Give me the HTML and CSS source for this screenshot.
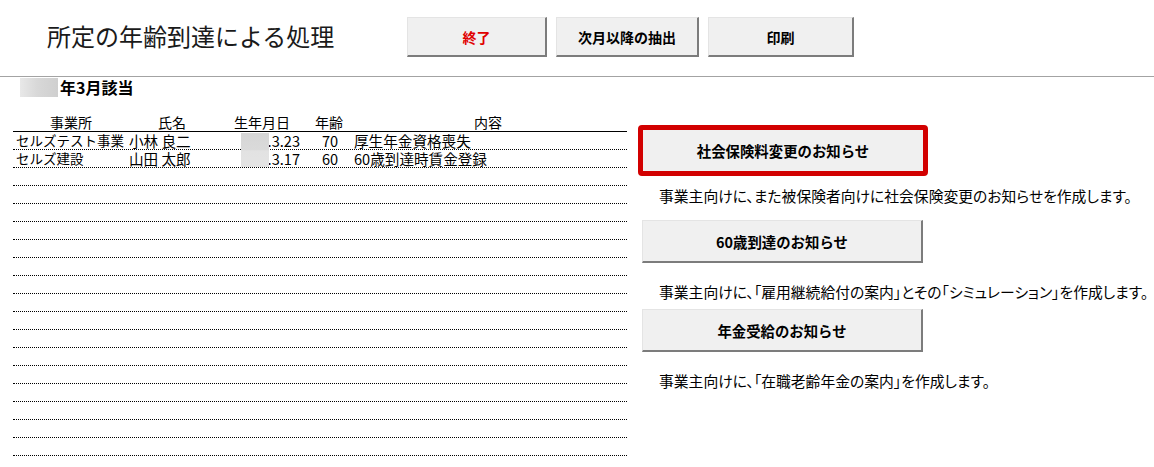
FILE: index.html
```html
<!DOCTYPE html>
<html>

<head>
    <meta charset="UTF-8">
    <title>所定の年齢到達による処理</title>
    <link rel="stylesheet" href="styles.css">
</head>

<body>
    <header class="toolbar">
        <h1 class="title">所定の年齢到達による処理</h1>
        <div class="toolbar-buttons">
            <button class="sheet-button exit">終了</button>
            <button class="sheet-button next">次月以降の抽出</button>
            <button class="sheet-button print">印刷</button>
        </div>
    </header>

    <div class="period">
        <span class="redact-year"></span>
        <span class="period-label">年3月該当</span>
    </div>

    <div class="content">
        <div class="ledger">
            <div class="ledger-head">
                <span>事業所</span>
                <span>氏名</span>
                <span>生年月日</span>
                <span>年齢</span>
                <span>内容</span>
            </div>
            <div class="ledger-row">
                <span class="cell-office">セルズテスト事業</span>
                <span class="cell-name">小林 良二</span>
                <span class="cell-birth">.3.23</span>
                <span class="cell-age">70</span>
                <span class="cell-note">厚生年金資格喪失</span>
            </div>
            <div class="ledger-row">
                <span class="cell-office">セルズ建設</span>
                <span class="cell-name">山田 太郎</span>
                <span class="cell-birth">.3.17</span>
                <span class="cell-age">60</span>
                <span class="cell-note">60歳到達時賃金登録</span>
            </div>
            <div class="ledger-row"></div>
            <div class="ledger-row"></div>
            <div class="ledger-row"></div>
            <div class="ledger-row"></div>
            <div class="ledger-row"></div>
            <div class="ledger-row"></div>
            <div class="ledger-row"></div>
            <div class="ledger-row"></div>
            <div class="ledger-row"></div>
            <div class="ledger-row"></div>
            <div class="ledger-row"></div>
            <div class="ledger-row"></div>
            <div class="ledger-row"></div>
            <div class="ledger-row"></div>
            <div class="ledger-row"></div>
            <div class="ledger-row"></div>
            <!-- blurred birth years -->
            <span class="redact-birth"></span>
        </div>

        <section class="notices">
            <div class="notice notice-primary">
                <div class="notice-frame">
                    <button class="notice-button">社会保険料変更のお知らせ</button>
                </div>
                <p class="notice-text">事業主向けに、また被保険者向けに社会保険変更のお知らせを作成します。</p>
            </div>
            <div class="notice">
                <button class="notice-button">60歳到達のお知らせ</button>
                <p class="notice-text">事業主向けに、「雇用継続給付の案内」とその「シミュレーション」を作成します。</p>
            </div>
            <div class="notice">
                <button class="notice-button">年金受給のお知らせ</button>
                <p class="notice-text">事業主向けに、「在職老齢年金の案内」を作成します。</p>
            </div>
        </section>
    </div>
</body>

</html>
```

FILE: styles.css
```css
html,
body {
    margin: 0;
    width: 100%;
    height: 100%;
    background-color: #FFFFFF;
    color: #000000;
    font-family: "Noto Sans CJK JP", sans-serif;
}

button {
    font-family: inherit;
    cursor: pointer;
}

.toolbar {
    display: flex;
    align-items: flex-start;
    height: 59px;
    padding-top: 17px;
    border-bottom: 1px solid #A3A3A3;
}

.title {
    box-sizing: border-box;
    flex: 0 0 407px;
    margin: 3px 0 0;
    padding-left: 47px;
    font-size: 24px;
    font-weight: normal;
    line-height: 32px;
    color: #1A1A1A;
}

.toolbar-buttons {
    display: flex;
    gap: 9px;
}

.sheet-button {
    box-sizing: border-box;
    height: 40px;
    padding: 0;
    font-size: 14px;
    font-weight: bold;
    color: #000000;
    background: #F0F0F0;
    border: 1px solid #E4E4E4;
    border-right: 2px solid #7C7C7C;
    border-bottom: 2px solid #7C7C7C;
}

.sheet-button.exit {
    width: 140px;
    color: #E00000;
}

.sheet-button.next {
    width: 143px;
}

.sheet-button.print {
    width: 146px;
}

.period {
    display: flex;
    align-items: center;
    height: 20px;
    padding-left: 20px;
}

.redact-year {
    width: 38px;
    height: 19px;
    background: linear-gradient(90deg, #E8E8E8 0%, #D8D8D8 45%, #CFCFCF 100%);
}

.period-label {
    margin-left: 2px;
    font-size: 16px;
    font-weight: bold;
    line-height: 20px;
}

.content {
    display: flex;
    align-items: flex-start;
    margin-top: 17px;
}

.ledger {
    position: relative;
    flex: 0 0 614px;
    margin-left: 13px;
    font-size: 14.6px;
}

.ledger-head,
.ledger-row {
    display: grid;
    grid-template-columns: 116px 86px 94px 40px 1fr;
    height: 17px;
    line-height: 17px;
    white-space: nowrap;
}

.ledger-head {
    font-size: 14px;
    border-bottom: 1px solid #000000;
    text-align: center;
}

.ledger-row {
    border-bottom: 1px dotted #000000;
}

.cell-office {
    padding-left: 3px;
    font-size: 13.5px;
}

.cell-birth {
    padding-right: 9px;
    text-align: right;
}

.cell-age {
    padding-left: 2px;
    text-align: center;
}

.cell-note {
    padding-left: 5px;
}

.redact-birth {
    position: absolute;
    top: 19px;
    left: 228px;
    width: 28px;
    height: 34px;
    background: linear-gradient(180deg, #D6D6D6 0%, #DADADA 50%, #E2E2E2 52%, #E4E4E4 100%);
}

.notices {
    flex: 0 0 auto;
    margin-top: 11px;
    margin-left: 11px;
}

.notice+.notice {
    margin-top: 8px;
}

.notice-primary+.notice {
    margin-top: 15px;
}

.notice-button {
    box-sizing: border-box;
    display: block;
    width: 281px;
    height: 43px;
    margin-left: 4px;
    padding: 0;
    font-size: 14.4px;
    font-weight: bold;
    color: #000000;
    background: #F0F0F0;
    border: 1px solid #E4E4E4;
    border-right: 2px solid #7C7C7C;
    border-bottom: 2px solid #7C7C7C;
}

.notice-frame {
    width: 280px;
    border: 5px solid #D20000;
    border-radius: 4px;
}

.notice-frame .notice-button {
    width: 280px;
    height: 41px;
    margin-left: 0;
    border: none;
}

.notice-text {
    margin: 20px 0 0 21px;
    font-size: 14.8px;
    line-height: 18px;
    white-space: nowrap;
    font-feature-settings: "palt";
}

.notice-primary .notice-text {
    margin-top: 11px;
}
```
